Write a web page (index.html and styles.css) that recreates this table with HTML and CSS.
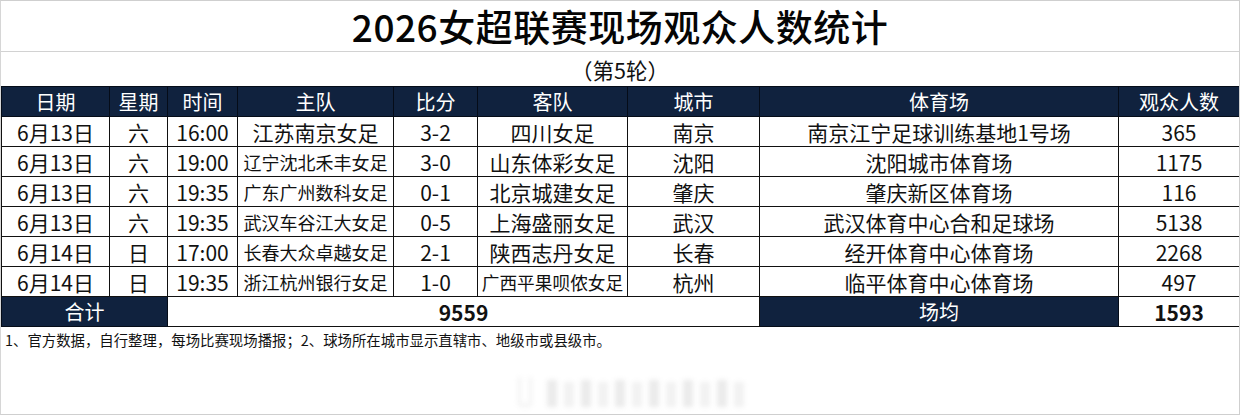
FILE: index.html
```html
<!DOCTYPE html>
<html lang="zh-CN">
<head>
<meta charset="utf-8">
<title>2026女超联赛现场观众人数统计</title>
<link rel="stylesheet" href="styles.css">
</head>
<body>
<div class="sheet">
  <div class="title">2026女超联赛现场观众人数统计</div>
  <div class="subtitle">（第5轮）</div>
  <table class="stats">
    <colgroup>
      <col class="c-date"><col class="c-week"><col class="c-time"><col class="c-home"><col class="c-score"><col class="c-away"><col class="c-city"><col class="c-venue"><col class="c-att">
    </colgroup>
    <thead>
      <tr><th>日期</th><th>星期</th><th>时间</th><th>主队</th><th>比分</th><th>客队</th><th>城市</th><th>体育场</th><th>观众人数</th></tr>
    </thead>
    <tbody>
      <tr><td>6月13日</td><td>六</td><td>16:00</td><td>江苏南京女足</td><td>3-2</td><td>四川女足</td><td>南京</td><td>南京江宁足球训练基地1号场</td><td>365</td></tr>
      <tr><td>6月13日</td><td>六</td><td>19:00</td><td class="small">辽宁沈北禾丰女足</td><td>3-0</td><td>山东体彩女足</td><td>沈阳</td><td>沈阳城市体育场</td><td>1175</td></tr>
      <tr><td>6月13日</td><td>六</td><td>19:35</td><td class="small">广东广州数科女足</td><td>0-1</td><td>北京城建女足</td><td>肇庆</td><td>肇庆新区体育场</td><td>116</td></tr>
      <tr><td>6月13日</td><td>六</td><td>19:35</td><td class="small">武汉车谷江大女足</td><td>0-5</td><td>上海盛丽女足</td><td>武汉</td><td>武汉体育中心合和足球场</td><td>5138</td></tr>
      <tr><td>6月14日</td><td>日</td><td>17:00</td><td class="small">长春大众卓越女足</td><td>2-1</td><td>陕西志丹女足</td><td>长春</td><td>经开体育中心体育场</td><td>2268</td></tr>
      <tr><td>6月14日</td><td>日</td><td>19:35</td><td class="small">浙江杭州银行女足</td><td>1-0</td><td class="smaller">广西平果呗侬女足</td><td>杭州</td><td>临平体育中心体育场</td><td>497</td></tr>
      <tr class="total"><td colspan="2" class="dark">合计</td><td colspan="5" class="sum">9559</td><td class="dark">场均</td><td class="sum">1593</td></tr>
    </tbody>
  </table>
  <p class="note">1、官方数据，自行整理，每场比赛现场播报；2、球场所在城市显示直辖市、地级市或县级市。</p>
  <div class="watermark"><span class="wm-logo"></span><span class="wm-s"></span><span class="wm-s"></span><span class="wm-s"></span><span class="wm-s"></span><span class="wm-s"></span><span class="wm-s"></span><span class="wm-s"></span><span class="wm-s"></span><span class="wm-s"></span><span class="wm-s"></span><span class="wm-s"></span><span class="wm-s"></span></div>
</div>
</body>
</html>
```

FILE: styles.css
```css
* { box-sizing: border-box; }
html, body { margin: 0; padding: 0; background: #fff; }
body {
  font-family: "Noto Sans CJK SC", "Noto Sans", sans-serif;
  color: #111;
}
.sheet {
  width: 1240px;
  height: 415px;
  border: 1px solid #cfcfcf;
  border-left-color: #d6d6d6;
  overflow: hidden;
}
.title {
  height: 51px;
  border-bottom: 1px solid #d2d2d2;
  text-align: center;
  font-size: 37px;
  font-weight: 500;
  line-height: 51px;
  color: #050505;
  letter-spacing: 0.5px;
}
.subtitle {
  height: 34px;
  text-align: center;
  font-size: 21.5px;
  line-height: 36px;
  color: #111;
}
.stats {
  width: 1238px;
  border-collapse: collapse;
  table-layout: fixed;
}
.c-date { width: 108px; }
.c-week { width: 58px; }
.c-time { width: 70px; }
.c-home { width: 156px; }
.c-score { width: 84px; }
.c-away { width: 150px; }
.c-city { width: 132px; }
.c-venue { width: 359px; }
.c-att { width: 121px; }
.stats th, .stats td {
  height: 30px;
  padding: 0;
  text-align: center;
  white-space: nowrap;
  overflow: hidden;
  border: 1px solid #111;
  line-height: 28px;
}
.stats th {
  background: #10223e;
  color: #fff;
  font-weight: 400;
  font-size: 20px;
  border-color: #050c18;
}
.stats td {
  font-size: 21px;
  color: #111;
}
.stats td.small { font-size: 18px; }
.stats td.smaller { font-size: 17.7px; }
.stats td.dark {
  background: #10223e;
  color: #fff;
  font-size: 20px;
  border-color: #050c18;
}
.stats td.sum {
  font-weight: 700;
  font-size: 21px;
}
.note {
  margin: 0;
  padding: 3px 0 0 4px;
  font-size: 14.4px;
  line-height: 20px;
  color: #111;
}
.watermark {
  display: flex;
  align-items: flex-end;
  gap: 7px;
  margin: 23px 0 0 517px;
  height: 34px;
  filter: blur(2.5px);
  opacity: 0.3;
}
.wm-logo {
  width: 14px;
  height: 30px;
  border: 3px solid #d0d0d0;
  border-top: none;
  border-radius: 0 0 4px 4px;
  margin-right: 8px;
}
.wm-s {
  width: 10px;
  height: 27px;
  background: #bcbcbc;
}
.wm-s:nth-child(odd) { background: #d2d2d2; height: 25px; }
```
